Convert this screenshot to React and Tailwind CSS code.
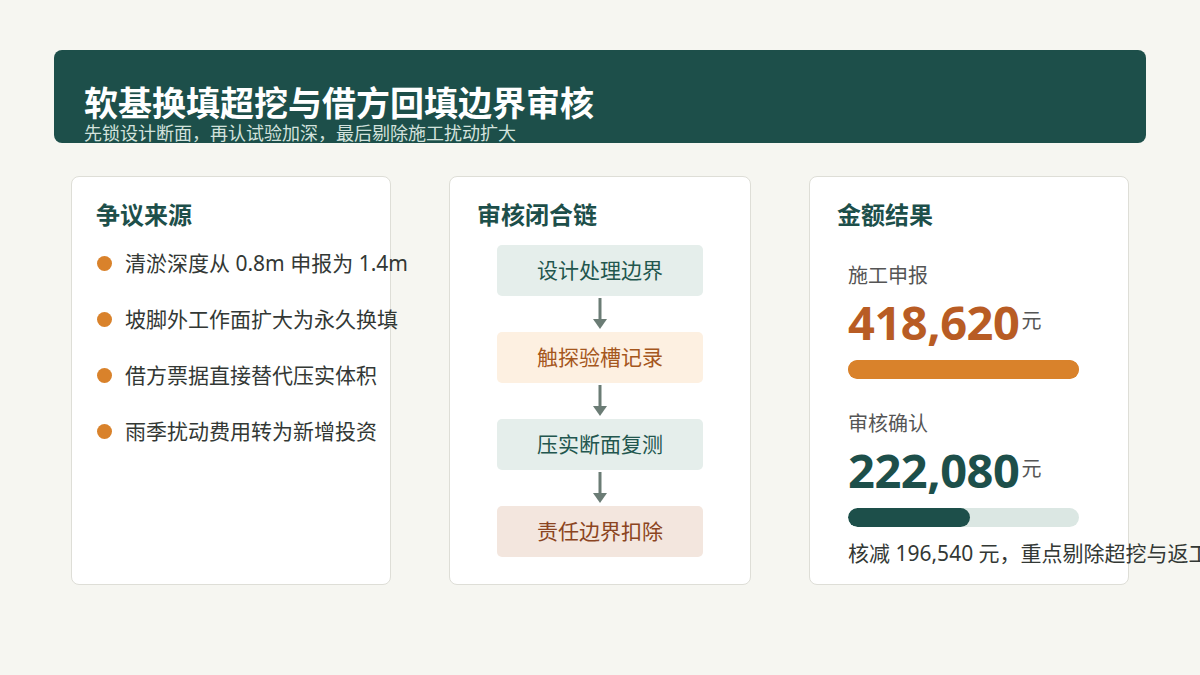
import React from 'react';

const FONT = { fontFamily: '"Noto Sans", "Noto Sans CJK SC", sans-serif' };

const disputes = [
  '清淤深度从 0.8m 申报为 1.4m',
  '坡脚外工作面扩大为永久换填',
  '借方票据直接替代压实体积',
  '雨季扰动费用转为新增投资',
];

const chain = [
  { label: '设计处理边界', box: 'bg-[#e5eeeb] text-[#22564e]' },
  { label: '触探验槽记录', box: 'bg-[#fdf0e1] text-[#a5571d]' },
  { label: '压实断面复测', box: 'bg-[#e5eeeb] text-[#22564e]' },
  { label: '责任边界扣除', box: 'bg-[#f3e6de] text-[#8b4421]' },
];

function Arrow() {
  return (
    <div className="h-[36px] flex justify-center pt-[2px]">
      <svg width="16" height="32" viewBox="0 0 16 32">
        <line x1="8" y1="0" x2="8" y2="22" stroke="#6b7c75" strokeWidth="3" />
        <path d="M1 21 L15 21 L8 31 Z" fill="#6b7c75" />
      </svg>
    </div>
  );
}

function Amount({ label, value, valueColor, pct, fill, track }) {
  return (
    <div>
      <div className="text-[20px] leading-[28px] text-[#555]">{label}</div>
      <div className="flex items-baseline mt-[6px] h-[52px]">
        <span className={`text-[47px] leading-[52px] font-bold tracking-[-0.01em] ${valueColor}`}>{value}</span>
        <span className="text-[20px] text-[#555] ml-[2px] relative -top-[12px]">元</span>
      </div>
      <div className={`mt-[12px] w-[231px] h-[19px] rounded-full overflow-hidden ${track}`}>
        <div className={`h-full rounded-full ${fill}`} style={{ width: `${pct}%` }} />
      </div>
    </div>
  );
}

export default function App() {
  return (
    <div className="w-[1200px] h-[675px] overflow-hidden bg-[#f6f6f1] pt-[50px] px-[54px]" style={FONT}>
      <div className="h-[93px] rounded-[8px] bg-[#1d4f4a] px-[30px] pt-[33px]">
        <h1 className="text-[34px] leading-[40px] font-bold text-white whitespace-nowrap">
          软基换填超挖与借方回填边界审核
        </h1>
        <p className="text-[18px] leading-[20px] text-[#d3e2dd] whitespace-nowrap">
          先锁设计断面，再认试验加深，最后剔除施工扰动扩大
        </p>
      </div>

      <div className="mt-[33px] px-[17px] flex gap-[58px]">
        {/* 争议来源 */}
        <div className="w-[320px] h-[409px] bg-white rounded-[8px] border border-[#deded7] pl-[24px] pt-[22px]">
          <h2 className="text-[24px] leading-[32px] font-bold text-[#1d4f4a]">争议来源</h2>
          <div className="mt-[18px] flex flex-col gap-[28px]">
            {disputes.map((d, i) => (
              <div key={i} className="flex items-center h-[28px] whitespace-nowrap">
                <span className="w-[15px] h-[15px] rounded-full bg-[#d9822b] ml-[1px] shrink-0" />
                <span className="ml-[13px] text-[21px] leading-[28px] text-[#333835]">{d}</span>
              </div>
            ))}
          </div>
        </div>

        {/* 审核闭合链 */}
        <div className="w-[304px] h-[409px] bg-white rounded-[8px] border border-[#deded7] pt-[22px]">
          <h2 className="pl-[27px] text-[24px] leading-[32px] font-bold text-[#1d4f4a]">审核闭合链</h2>
          <div className="mt-[14px] flex flex-col items-center">
            {chain.map((c, i) => (
              <React.Fragment key={i}>
                {i > 0 && <Arrow />}
                <div className={`w-[206px] h-[51px] rounded-[5px] flex items-center justify-center text-[21px] ${c.box}`}>
                  {c.label}
                </div>
              </React.Fragment>
            ))}
          </div>
        </div>

        {/* 金额结果 */}
        <div className="w-[320px] h-[409px] bg-white rounded-[8px] border border-[#deded7] pl-[27px] pt-[22px]">
          <h2 className="text-[24px] leading-[32px] font-bold text-[#1d4f4a]">金额结果</h2>
          <div className="pl-[11px] mt-[31px]">
            <Amount label="施工申报" value="418,620" valueColor="text-[#b85c24]" pct={100} fill="bg-[#d9822b]" track="bg-[#d9822b]" />
            <div className="mt-[31px]">
              <Amount label="审核确认" value="222,080" valueColor="text-[#1d4f4a]" pct={53} fill="bg-[#1d4f4a]" track="bg-[#dbe7e3]" />
            </div>
            <div className="mt-[12px] text-[21px] leading-[28px] text-[#333835] whitespace-nowrap">
              核减 196,540 元，重点剔除超挖与返工扰动
            </div>
          </div>
        </div>
      </div>
    </div>
  );
}
